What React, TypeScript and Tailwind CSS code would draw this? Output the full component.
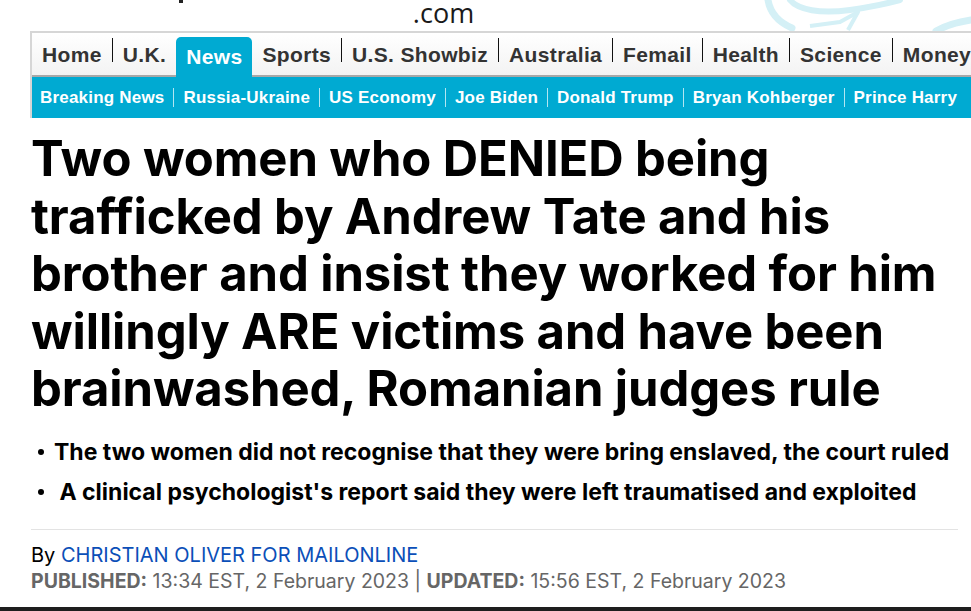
import React from "react";

const mainNav = [
  "Home",
  "U.K.",
  "News",
  "Sports",
  "U.S. Showbiz",
  "Australia",
  "Femail",
  "Health",
  "Science",
  "Money",
];

const subNav = [
  "Breaking News",
  "Russia-Ukraine",
  "US Economy",
  "Joe Biden",
  "Donald Trump",
  "Bryan Kohberger",
  "Prince Harry",
];

const bullets = [
  "The two women did not recognise that they were bring enslaved, the court ruled",
  " A clinical psychologist's report said they were left traumatised and exploited",
];

const Swirl = () => (
  <svg
    className="absolute left-[740px] top-0"
    width="231"
    height="31"
    viewBox="0 0 231 31"
    fill="none"
  >
    <path
      d="M28 0 C30 12 38 22 52 28"
      stroke="#d4f0f6"
      strokeWidth="7"
      strokeLinecap="round"
    />
    <path
      d="M50 0 C58 10 80 14 110 10 C130 7 145 4 160 0"
      stroke="#d4f0f6"
      strokeWidth="6"
      strokeLinecap="round"
    />
    <path
      d="M70 26 L100 22 L118 12 L108 30"
      stroke="#d4f0f6"
      strokeWidth="4"
      strokeLinejoin="round"
    />
    <path
      d="M196 31 C205 26 218 22 231 20"
      stroke="#d4f0f6"
      strokeWidth="7"
      strokeLinecap="round"
    />
  </svg>
);

export default function App() {
  return (
    <div className="relative h-[611px] w-[971px] overflow-hidden bg-white">
      <header className="relative h-[31px]">
        <div className="absolute left-[179px] top-0 h-[3px] w-[4px] bg-[#222]" />
        <div
          className="pt-[2px] text-center text-[27px] leading-[22px] text-[#1a1a1a]"
          style={{ fontFamily: "'Open Sans', 'Noto Sans', sans-serif" }}
        >
          <span className="relative left-[-42px]">.com</span>
        </div>
        <Swirl />
      </header>

      <nav
        className="ml-[30px] border-l-2 border-t-2 border-[#d6d6d6]"
        style={{ fontFamily: "'Liberation Sans', Arial, sans-serif" }}
      >
        <div className="flex h-[44px] items-end whitespace-nowrap border-b-2 border-[#a8a8a8] bg-gradient-to-b from-white to-[#f3f3f3]">
          {mainNav.map((item, i) => {
            const active = item === "News";
            const prevActive = mainNav[i - 1] === "News";
            return (
              <React.Fragment key={item}>
                {i > 0 && !active && !prevActive && (
                  <span className="mb-[8px] h-[24px] w-px shrink-0 self-center bg-[#111]" />
                )}
                {active ? (
                  <span className="relative z-10 -mb-[2px] flex h-[40px] items-center rounded-t-[5px] bg-[#00aad2] px-[10px] text-[21px] font-bold tracking-[0.35px] text-white">
                    {item}
                  </span>
                ) : (
                  <span className="flex h-[40px] items-center px-[10px] text-[21px] font-bold tracking-[0.35px] text-[#333]">
                    {item}
                  </span>
                )}
              </React.Fragment>
            );
          })}
        </div>
        <div className="flex h-[41px] items-center whitespace-nowrap bg-[#00aad2] pl-[8px]">
          {subNav.map((item, i) => (
            <React.Fragment key={item}>
              {i > 0 && <span className="mx-[9px] h-[19px] w-px bg-white/70" />}
              <span className="text-[17px] font-bold tracking-[0.2px] text-white">
                {item}
              </span>
            </React.Fragment>
          ))}
        </div>
      </nav>

      <main
        className="pl-[31px]"
        style={{ fontFamily: "Inter, 'Open Sans', sans-serif" }}
      >
        <h1 className="mt-[12px] whitespace-nowrap text-[49px] font-bold leading-[57.6px] tracking-[-0.1px] text-black">
          Two women who DENIED being
          <br />
          trafficked by Andrew Tate and his
          <br />
          brother and insist they worked for him
          <br />
          willingly ARE victims and have been
          <br />
          brainwashed, Romanian judges rule
        </h1>

        <ul className="mt-[20px] space-y-[12px]">
          {bullets.map((b) => (
            <li
              key={b}
              className="flex items-center whitespace-pre text-[23px] font-bold leading-[28px] text-black"
            >
              <span className="ml-[7px] mr-[10px] h-[6px] w-[6px] rounded-full bg-black" />
              {b}
            </li>
          ))}
        </ul>

        <div className="mr-[13px] mt-[23px] h-px bg-[#e3e3e3]" />

        <div className="mt-[13px] text-[20px] leading-[25px]">
          <span className="text-black">By </span>
          <span className="text-[#0b4fb8]">CHRISTIAN OLIVER FOR MAILONLINE</span>
        </div>
        <div className="text-[19.5px] leading-[26px] text-[#666]">
          <span className="font-bold">PUBLISHED:</span> 13:34 EST, 2 February 2023 |{" "}
          <span className="font-bold">UPDATED:</span> 15:56 EST, 2 February 2023
        </div>
      </main>

      <div className="absolute bottom-0 left-0 h-[4px] w-full bg-[#1e1e1e]" />
    </div>
  );
}
